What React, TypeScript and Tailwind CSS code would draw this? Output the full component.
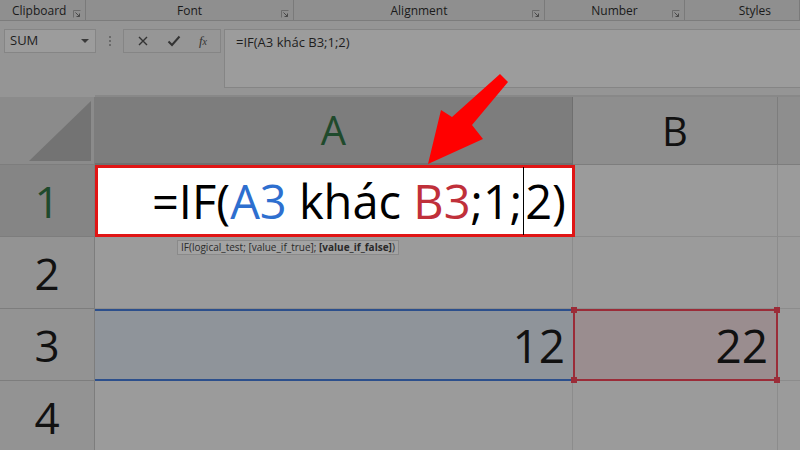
import React from 'react';

const font = { fontFamily: '"Segoe UI", "Open Sans", "Noto Sans", sans-serif' };

function RibbonLabels() {
  const groups = [
    { label: 'Clipboard', w: 'w-[86px]', launcher: true },
    { label: 'Font', w: 'w-[208px]', launcher: true },
    { label: 'Alignment', w: 'w-[251px]', launcher: true },
    { label: 'Number', w: 'w-[140px]', launcher: true },
    { label: 'Styles', w: 'flex-1', launcher: false },
  ];
  return (
    <div className="flex h-[21px] border-b border-[#7c7c7c] bg-[#8f8f8f]">
      {groups.map((g) => (
        <div key={g.label} className={`${g.w} relative flex items-end justify-center border-r border-[#7a7a7a] pb-[1px] text-[12px] leading-[16px] text-[#1a1a1a]`}>
          <span className={g.label === 'Clipboard' ? 'mr-auto pl-[12px]' : g.label === 'Styles' ? 'ml-auto pr-[28px]' : ''}>{g.label}</span>
          {g.launcher && (
            <svg className="absolute right-[4px] top-[10px]" width="8" height="8" viewBox="0 0 8 8">
              <path d="M0.5 7.5V0.5H7.5" stroke="#6b6b6b" fill="none" />
              <path d="M2.5 2.5L6.5 6.5M6.5 3.5V6.5H3.5" stroke="#4a4a4a" fill="none" />
            </svg>
          )}
        </div>
      ))}
    </div>
  );
}

function FormulaBar() {
  return (
    <div className="relative h-[76px] bg-[#959595]">
      <div className="flex items-start gap-0 pt-[8px] pl-[4px]">
        <div className="flex h-[24px] w-[92px] items-center justify-between border border-[#858585] bg-[#9c9c9c] pl-[5px] pr-[6px] text-[13px] text-[#1e1e1e]">
          <span>SUM</span>
          <svg width="8" height="5" viewBox="0 0 8 5">
            <path d="M0 0H8L4 4Z" fill="#3a3a3a" />
          </svg>
        </div>
        <div className="flex h-[24px] w-[27px] flex-col items-center justify-center gap-[2px]">
          <span className="h-[2px] w-[2px] bg-[#6a6a6a]" />
          <span className="h-[2px] w-[2px] bg-[#6a6a6a]" />
          <span className="h-[2px] w-[2px] bg-[#6a6a6a]" />
        </div>
        <div className="flex h-[24px] w-[98px] items-center justify-around border border-[#858585] bg-[#969696] px-[4px]">
          <svg width="12" height="12" viewBox="0 0 12 12">
            <path d="M2 2L10 10M10 2L2 10" stroke="#333" strokeWidth="1.4" />
          </svg>
          <svg width="14" height="12" viewBox="0 0 14 12">
            <path d="M1.5 6.5L5 10L12.5 1.5" stroke="#333" strokeWidth="2" fill="none" />
          </svg>
          <span className="text-[13px] italic text-[#333]" style={{ fontFamily: '"Liberation Serif", serif' }}>
            f<span className="text-[10px]">x</span>
          </span>
        </div>
        <div className="ml-[3px] flex h-[59px] flex-1 border border-[#858585] border-r-0 bg-[#9c9c9c] pl-[11px] pt-[3px] text-[13px] text-[#1e1e1e]">
          =IF(A3 khác B3;1;2)
        </div>
      </div>
      <div className="absolute bottom-0 left-[95px] right-0 h-[2px] bg-[#888]" />
    </div>
  );
}

function Grid() {
  const rowHead = 'flex items-center justify-center border-b border-r border-[#7d7d7d] text-[44px] leading-none text-[#111]';
  const cell = 'border-b border-r border-[#8c8c8c]';
  return (
    <div className="grid grid-cols-[95px_478px_205px_1fr] grid-rows-[68px_72px_72px_72px_72px]" style={font}>
      {/* header row */}
      <div className="relative border-b border-r border-[#7d7d7d] bg-[#8b8b8b]">
        <svg className="absolute bottom-[3px] right-[3px]" width="62" height="60" viewBox="0 0 62 60">
          <path d="M62 0V60H0Z" fill="#737373" />
        </svg>
      </div>
      <div className="flex items-center justify-center border-b-2 border-r border-[#6f6f6f] bg-[#7d7d7d] text-[40px] text-[#1f4a2c]">A</div>
      <div className="flex items-center justify-center border-b border-r border-[#7d7d7d] bg-[#8e8e8e] text-[40px] text-[#111]">B</div>
      <div className="border-b border-[#7d7d7d] bg-[#8e8e8e]" />

      {/* row 1 */}
      <div className={`${rowHead} bg-[#858585] !text-[#1f4a2c]`}>1</div>
      <div className="relative z-10 -mr-[2px] flex items-center border-[3px] border-[#e01515] bg-white pl-[54px] text-[47px] leading-none text-black">
        <span>=IF(</span>
        <span className="text-[#2e6fcf]">A3</span>
        <span>&nbsp;khác&nbsp;</span>
        <span className="text-[#c0303a]">B3</span>
        <span>;1;</span>
        <span className="mx-[1px] h-[68px] w-[1px] bg-black" />
        <span>2)</span>
      </div>
      <div className={`${cell} bg-[#9b9b9b]`} />
      <div className="border-b border-[#8c8c8c] bg-[#9b9b9b]" />

      {/* row 2 */}
      <div className={`${rowHead} bg-[#939393]`}>2</div>
      <div className={`${cell} relative bg-[#9b9b9b]`}>
        <div className="absolute left-[82px] top-[3px] z-20 whitespace-nowrap border border-[#8a8a8a] bg-[#a3a3a3] px-[3px] text-[10px] leading-[13px] text-[#2a2a2a]">
          IF(logical_test; [value_if_true]; <b>[value_if_false]</b>)
        </div>
      </div>
      <div className={`${cell} bg-[#9b9b9b]`} />
      <div className="border-b border-[#8c8c8c] bg-[#9b9b9b]" />

      {/* row 3 */}
      <div className={`${rowHead} bg-[#939393]`}>3</div>
      <div className="flex items-center justify-end border-y-2 border-[#2c4f8c] bg-[#8f949a] pr-[8px] text-[46px] leading-none text-[#111]">12</div>
      <div className="relative flex items-center justify-end border-2 border-[#9b2c38] bg-[#9a8d8f] pr-[8px] text-[46px] leading-none text-[#111]">
        22
        <span className="absolute -left-[4px] -top-[4px] h-[6px] w-[6px] bg-[#9b2c38]" />
        <span className="absolute -right-[4px] -top-[4px] h-[6px] w-[6px] bg-[#9b2c38]" />
        <span className="absolute -left-[4px] -bottom-[4px] h-[6px] w-[6px] bg-[#9b2c38]" />
        <span className="absolute -right-[4px] -bottom-[4px] h-[6px] w-[6px] bg-[#9b2c38]" />
      </div>
      <div className="border-b border-[#8c8c8c] bg-[#9b9b9b]" />

      {/* row 4 */}
      <div className={`${rowHead} bg-[#939393]`}>4</div>
      <div className={`${cell} bg-[#9b9b9b]`} />
      <div className={`${cell} bg-[#9b9b9b]`} />
      <div className="border-b border-[#8c8c8c] bg-[#9b9b9b]" />
    </div>
  );
}

export default function App() {
  return (
    <div className="relative h-[450px] w-[800px] overflow-hidden bg-[#9b9b9b]" style={font}>
      <RibbonLabels />
      <FormulaBar />
      <Grid />
      {/* red arrow pointing at the formula */}
      <svg className="absolute left-0 top-0" width="800" height="450" viewBox="0 0 800 450">
        <polygon points="500,74 508,82 472,125 483,139 428,164 441,110 452,117" fill="#ff0000" />
      </svg>
    </div>
  );
}
